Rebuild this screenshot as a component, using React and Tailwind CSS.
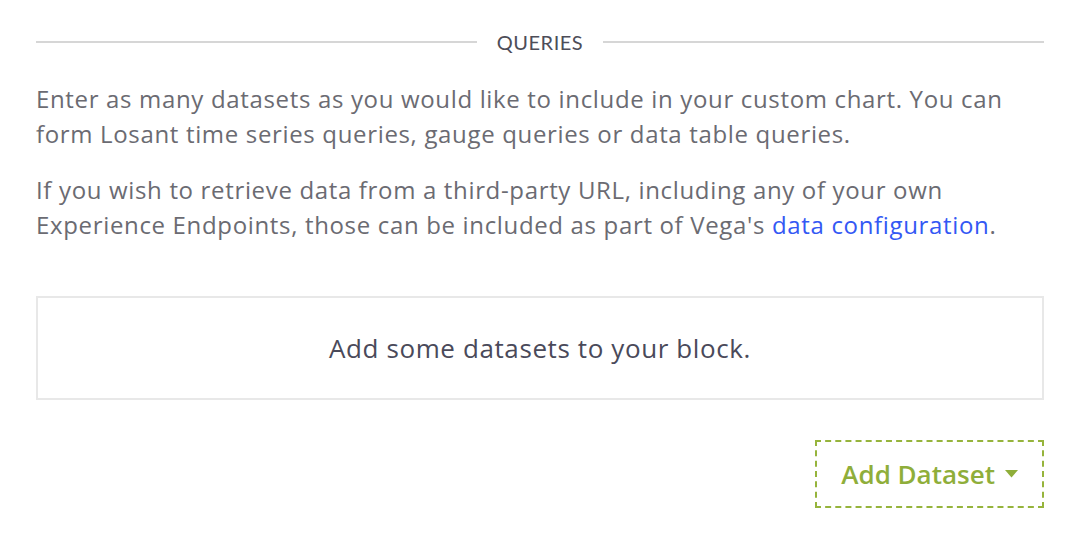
export default function App() {
  return (
    <div
      className="min-h-screen bg-white px-[36px] pt-[30px]"
      style={{ fontFamily: "'Open Sans', 'Noto Sans', sans-serif" }}
    >
      <div className="flex items-center gap-[20px]">
        <div className="h-[2px] flex-1 bg-[#d6d6d6]" />
        <span className="font-['Lato'] text-[20px] leading-[24px] tracking-[0.5px] text-[#4d4d58]">QUERIES</span>
        <div className="h-[2px] flex-1 bg-[#d6d6d6]" />
      </div>

      <p className="mt-[27px] text-[24px] leading-[35px] tracking-[0.66px] text-[#6b6b72]">
        Enter as many datasets as you would like to include in your custom chart. You can form Losant
        time series queries, gauge queries or data table queries.
      </p>
      <p className="mt-[21px] text-[24px] leading-[35px] tracking-[0.66px] text-[#6b6b72]">
        If you wish to retrieve data from a third-party URL, including any of your own Experience
        Endpoints, those can be included as part of Vega's{" "}
        <a href="#" className="text-[#3358f4]">
          data configuration
        </a>
        .
      </p>

      <div className="mt-[54px] flex h-[104px] items-center justify-center border-2 border-[#e8e8e8]">
        <span className="text-[26px] tracking-[0.6px] text-[#4a4a5a]">Add some datasets to your block.</span>
      </div>

      <div className="mt-[40px] flex justify-end">
        <button
          type="button"
          className="flex h-[68px] items-center gap-[10px] border-2 border-dashed border-[#96b43c] px-[24px] text-[26px] font-semibold text-[#8fae3a]"
        >
          Add Dataset
          <svg width="13" height="8" viewBox="0 0 13 8">
            <path d="M0 0 L13 0 L6.5 7.5 Z" fill="#8fae3a" />
          </svg>
        </button>
      </div>
    </div>
  );
}
